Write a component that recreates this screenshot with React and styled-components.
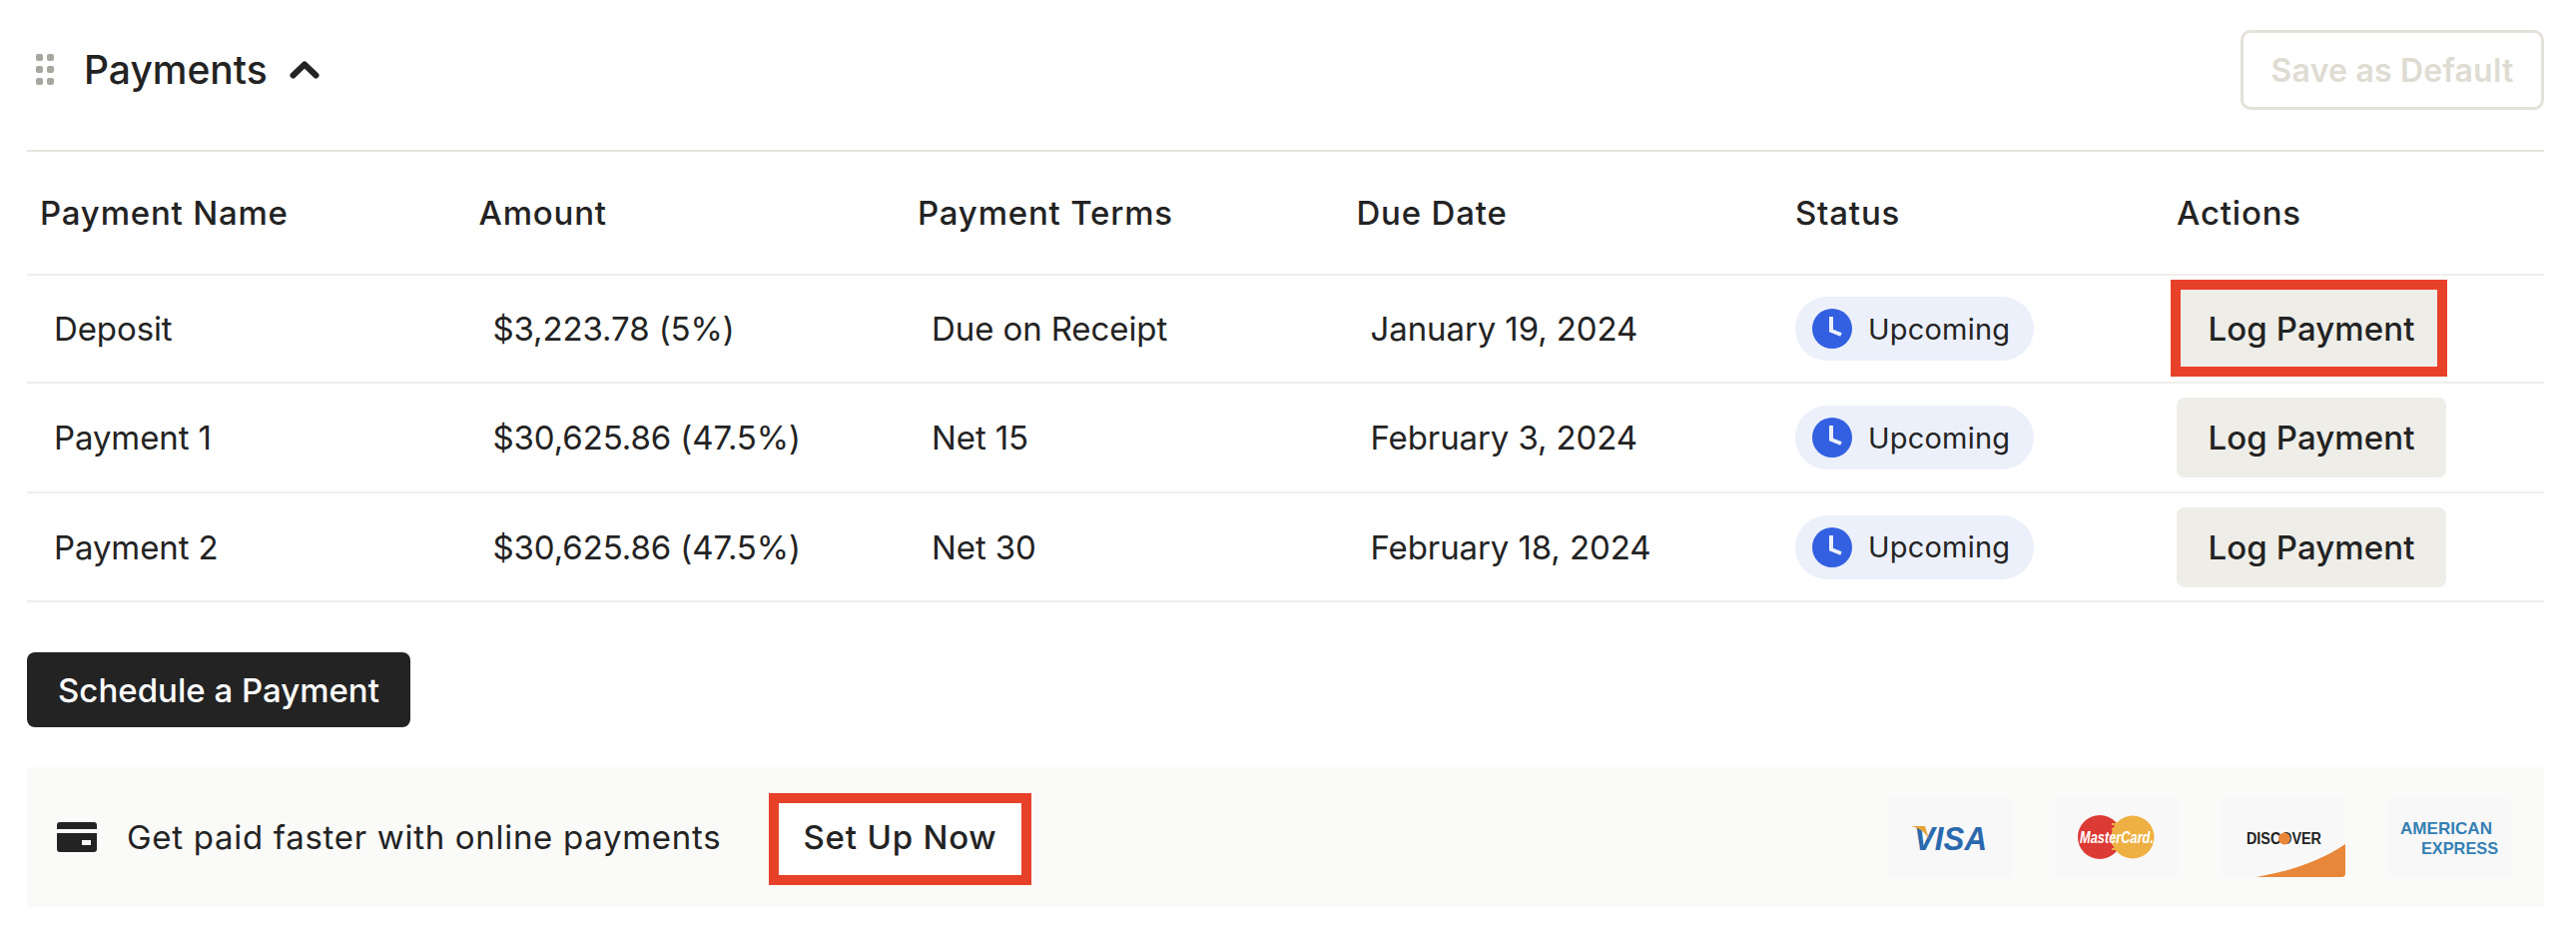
import styled, { createGlobalStyle } from 'styled-components';

const GlobalStyle = createGlobalStyle`
	html, body {
		margin: 0;
		padding: 0;
		background: #fff;
	}
	body {
		font-family: "Inter", "Liberation Sans", sans-serif;
		color: #232323;
	}
`;

const Page = styled.div`
	width: 2580px;
	height: 938px;
	box-sizing: border-box;
	padding: 0 32px 0 27px;
	overflow: hidden;
`;

const Header = styled.div`
	height: 140px;
	display: flex;
	align-items: center;
	justify-content: space-between;
	border-bottom: 2px solid #e8e6df;
	padding-bottom: 10px;
`;

const TitleGroup = styled.div`
	display: flex;
	align-items: center;
	padding-left: 9px;
`;

const Title = styled.h2`
	margin: 0 22px 0 30px;
	font-size: 39px;
	font-weight: 550;
	line-height: 48px;
`;

const SaveButton = styled.button`
	width: 304px;
	height: 80px;
	border: 3px solid #e4e1d9;
	border-radius: 10px;
	background: #fff;
	color: #dedcd3;
	font-family: inherit;
	font-size: 32px;
	font-weight: 600;
	letter-spacing: 0.2px;
`;

const Row = styled.div`
	display: grid;
	grid-template-columns: 439.5px 439.5px 439.5px 439.5px 395px 1fr;
	align-items: center;
	height: ${({ $height }) => $height}px;
	border-bottom: 2px solid #efeeea;
	box-sizing: border-box;
`;

const HeadCell = styled.div`
	padding-left: ${({ $flush }) => ($flush ? 0 : 13)}px;
	font-size: 33px;
	font-weight: 550;
	letter-spacing: 0.8px;
`;

const Cell = styled.div`
	padding-left: 27px;
	font-size: 33px;
	font-weight: 400;
	letter-spacing: -0.1px;
`;

const StatusCell = styled.div`
	padding-left: 13px;
`;

const Pill = styled.div`
	display: inline-flex;
	align-items: center;
	gap: 16px;
	width: 239px;
	height: 64px;
	box-sizing: border-box;
	padding-left: 17px;
	border-radius: 32px;
	background: #ecf0fb;
	font-size: 29px;
	letter-spacing: 0.2px;
`;

const ActionCell = styled.div`
	display: flex;
`;

const Highlight = styled.span`
	position: relative;
	display: inline-flex;

	&::after {
		content: '';
		position: absolute;
		border: 10px solid #e8412a;
		inset: ${({ $inset }) => $inset};
		pointer-events: none;
	}
`;

const LogButton = styled.button`
	width: 270px;
	height: 80px;
	border: 0;
	border-radius: 8px;
	background: #eeede8;
	color: #232323;
	font-family: inherit;
	font-size: 33px;
	font-weight: 550;
	letter-spacing: 0.1px;
`;

const ScheduleButton = styled.button`
	display: block;
	width: 384px;
	height: 75px;
	margin-top: 50px;
	border: 0;
	border-radius: 8px;
	background: #232323;
	color: #fff;
	font-family: inherit;
	font-size: 33px;
	font-weight: 550;
`;

const Banner = styled.div`
	display: flex;
	align-items: center;
	height: 140px;
	margin-top: 40px;
	padding: 0 32px 0 30px;
	background: #fafaf8;
`;

const BannerText = styled.span`
	width: 597px;
	margin-left: 30px;
	font-size: 33px;
	letter-spacing: 0.7px;
	white-space: nowrap;
`;

const SetupSlot = styled.div`
	margin: 4px 0 0 46px;
`;

const SetupButton = styled.button`
	width: 263px;
	height: 92px;
	padding: 0 0 4px;
	border: 0;
	background: #fff;
	color: #232323;
	font-family: inherit;
	font-size: 33px;
	font-weight: 550;
	letter-spacing: 0.8px;
`;

const Logos = styled.div`
	display: flex;
	gap: 42px;
	margin-left: auto;
`;

const LogoTile = styled.div`
	width: 125px;
	height: 79px;
	background: #f8f8f8;
	border-radius: 3px;
	overflow: hidden;

	svg {
		display: block;
		width: 100%;
		height: 100%;
	}
`;

const rows = [
	{ name: 'Deposit', amount: '$3,223.78 (5%)', terms: 'Due on Receipt', due: 'January 19, 2024', height: 108 },
	{ name: 'Payment 1', amount: '$30,625.86 (47.5%)', terms: 'Net 15', due: 'February 3, 2024', height: 110 },
	{ name: 'Payment 2', amount: '$30,625.86 (47.5%)', terms: 'Net 30', due: 'February 18, 2024', height: 109 }
];

const DragIcon = () => (
	<svg width="18" height="32" viewBox="0 0 18 32" fill="#a8a79f">
		<rect x="0" y="0" width="7" height="7" rx="2" />
		<rect x="11" y="0" width="7" height="7" rx="2" />
		<rect x="0" y="12" width="7" height="7" rx="2" />
		<rect x="11" y="12" width="7" height="7" rx="2" />
		<rect x="0" y="24" width="7" height="7" rx="2" />
		<rect x="11" y="24" width="7" height="7" rx="2" />
	</svg>
);

const ChevronUp = () => (
	<svg width="30" height="18" viewBox="0 0 30 18" fill="none" stroke="#232323" strokeWidth="6" strokeLinecap="round" strokeLinejoin="round">
		<path d="M3.5 14.5 15 3.5l11.5 11" />
	</svg>
);

const ClockIcon = () => (
	<svg width="40" height="40" viewBox="0 0 40 40">
		<circle cx="20" cy="20" r="20" fill="#3360e0" />
		<path d="M19 8v14l10 4" fill="none" stroke="#ecf0fb" strokeWidth="4" />
	</svg>
);

const CardIcon = () => (
	<svg width="40" height="30" viewBox="0 0 40 30">
		<path d="M3 0h34a3 3 0 0 1 3 3v4H0V3a3 3 0 0 1 3-3Z" fill="#232323" />
		<path d="M0 11h40v16a3 3 0 0 1-3 3H3a3 3 0 0 1-3-3Zm25 7v5h9v-5Z" fill="#232323" fillRule="evenodd" />
	</svg>
);

const VisaLogo = () => (
	<svg viewBox="0 0 125 79">
		<text x="27" y="52" fontFamily="Liberation Sans" fontSize="33" fontWeight="700" fontStyle="italic" fill="#2a69ad" textLength="73" lengthAdjust="spacingAndGlyphs">VISA</text>
		<path d="M24 28h14l4 13c-3-6-9-11-18-13Z" fill="#e5a33a" />
	</svg>
);

const MasterCardLogo = () => (
	<svg viewBox="0 0 125 79">
		<circle cx="46" cy="39" r="22" fill="#dc3a35" />
		<circle cx="79" cy="39" r="21.5" fill="#efb043" />
		<path d="M58 26h9M58 31h9M58 36h9M58 41h9M58 46h9M58 51h9" stroke="#efb043" strokeWidth="2" />
		<text x="26" y="45" fontFamily="Liberation Sans" fontSize="17" fontWeight="700" fontStyle="italic" fill="#fff" textLength="74" lengthAdjust="spacingAndGlyphs">MasterCard.</text>
	</svg>
);

const DiscoverLogo = () => (
	<svg viewBox="0 0 125 79">
		<path d="M36 79c34-6 64-16 89-33v30a3 3 0 0 1-3 3Z" fill="#e8873a" />
		<text x="26" y="46" fontFamily="Liberation Sans" fontSize="16" fontWeight="700" fill="#232323" textLength="75" lengthAdjust="spacingAndGlyphs">DISCOVER</text>
		<circle cx="64" cy="40.5" r="6" fill="#e8873a" />
	</svg>
);

const AmexLogo = () => (
	<svg viewBox="0 0 125 79">
		<text x="13" y="36" fontFamily="Liberation Sans" fontSize="17" fontWeight="700" fill="#3580b4" textLength="92" lengthAdjust="spacingAndGlyphs">AMERICAN</text>
		<text x="34" y="56" fontFamily="Liberation Sans" fontSize="17" fontWeight="700" fill="#3580b4" textLength="77" lengthAdjust="spacingAndGlyphs">EXPRESS</text>
	</svg>
);

const App = () => (
	<Page>
		<GlobalStyle />
		<Header>
			<TitleGroup>
				<DragIcon />
				<Title>Payments</Title>
				<ChevronUp />
			</TitleGroup>
			<SaveButton>Save as Default</SaveButton>
		</Header>
		<Row $height={124}>
			<HeadCell>Payment Name</HeadCell>
			<HeadCell>Amount</HeadCell>
			<HeadCell>Payment Terms</HeadCell>
			<HeadCell>Due Date</HeadCell>
			<HeadCell>Status</HeadCell>
			<HeadCell $flush>Actions</HeadCell>
		</Row>
		{rows.map((row, index) => (
			<Row key={row.name} $height={row.height}>
				<Cell>{row.name}</Cell>
				<Cell>{row.amount}</Cell>
				<Cell>{row.terms}</Cell>
				<Cell>{row.due}</Cell>
				<StatusCell>
					<Pill>
						<ClockIcon />
						Upcoming
					</Pill>
				</StatusCell>
				<ActionCell>
					{index === 0 ? (
						<Highlight $inset="-9px -1px -8px -6px">
							<LogButton>Log Payment</LogButton>
						</Highlight>
					) : (
						<LogButton>Log Payment</LogButton>
					)}
				</ActionCell>
			</Row>
		))}
		<ScheduleButton>Schedule a Payment</ScheduleButton>
		<Banner>
			<CardIcon />
			<BannerText>Get paid faster with online payments</BannerText>
			<SetupSlot>
				<Highlight $inset="0">
					<SetupButton>Set Up Now</SetupButton>
				</Highlight>
			</SetupSlot>
			<Logos>
				<LogoTile><VisaLogo /></LogoTile>
				<LogoTile><MasterCardLogo /></LogoTile>
				<LogoTile><DiscoverLogo /></LogoTile>
				<LogoTile><AmexLogo /></LogoTile>
			</Logos>
		</Banner>
	</Page>
);

export default App;
